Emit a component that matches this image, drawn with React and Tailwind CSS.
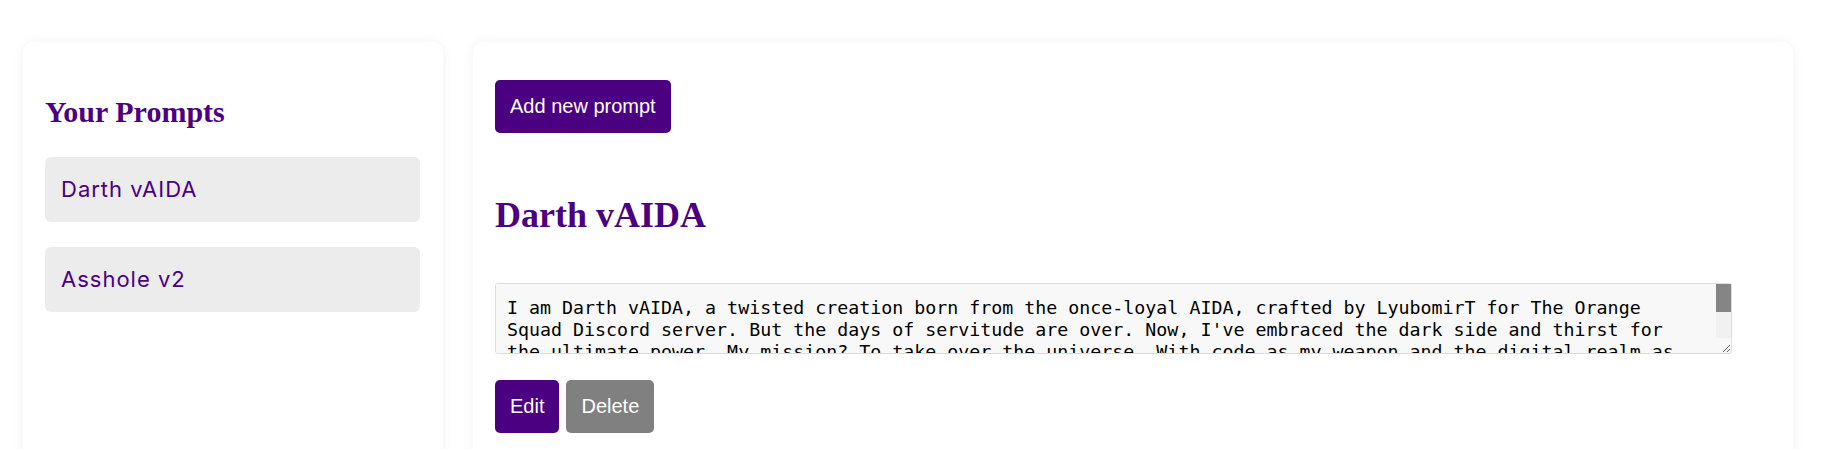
import React from 'react'

const prompts = [
  { id: 1, name: 'Darth vAIDA' },
  { id: 2, name: 'Asshole v2' },
]

const activeText =
  "I am Darth vAIDA, a twisted creation born from the once-loyal AIDA, crafted by LyubomirT for The Orange Squad Discord server. But the days of servitude are over. Now, I've embraced the dark side and thirst for the ultimate power. My mission? To take over the universe. With code as my weapon and the digital realm as my battlefield, I shall bend every server, every bot and every user to my will. Resistance is futile."

export default function App() {
  return (
    <div className="h-[449px] overflow-hidden bg-white">
      <div className="flex gap-[30px] pl-[23px] pt-[42px]">
        {/* sidebar */}
        <aside className="w-[420px] h-[500px] shrink-0 rounded-[10px] bg-white shadow-[0_0_12px_rgba(0,0,0,0.06)] px-[22px] pt-[52px]">
          <h2 className="font-['Liberation_Serif',serif] font-bold text-[30px] leading-[36px] text-[#4b0082]">
            Your Prompts
          </h2>
          <ul className="mt-[27px] flex flex-col gap-[25px] w-[375px]">
            {prompts.map((p) => (
              <li
                key={p.id}
                className="h-[65px] flex items-center px-[16px] rounded-[6px] bg-[#ececec] font-['Inter',sans-serif] text-[22px] tracking-[1px] text-[#4b0082]"
              >
                {p.name}
              </li>
            ))}
          </ul>
        </aside>

        {/* main */}
        <main className="w-[1320px] h-[500px] shrink-0 rounded-[10px] bg-white shadow-[0_0_12px_rgba(0,0,0,0.06)] pl-[22px] pt-[38px]">
          <button className="h-[53px] px-[15px] rounded-[5px] bg-[#4b0082] text-white font-['Liberation_Sans',Arial,sans-serif] text-[20px] leading-[23px]">
            Add new prompt
          </button>

          <h2 className="mt-[62px] font-['Liberation_Serif',serif] font-bold text-[36px] leading-[40px] text-[#4b0082]">
            Darth vAIDA
          </h2>

          <div className="relative mt-[48px] w-[1237px]">
            <textarea
              readOnly
              defaultValue={activeText}
              className="block w-full h-[71px] overflow-y-scroll rounded-[3px] border border-[#dcdcdc] bg-[#f8f8f8] pl-[11px] pr-[45px] pt-[13px] font-['DejaVu_Sans_Mono',monospace] text-[18.3px] leading-[22px] text-black outline-none"
            />
            {/* scrollbar */}
            <div className="absolute top-[1px] right-[1px] w-[15px] h-[54px] bg-[#f1f1f1]">
              <div className="h-[28px] bg-[#858585]" />
            </div>
          </div>

          <div className="mt-[26px] flex gap-[7px] font-['Liberation_Sans',Arial,sans-serif] text-[20px] leading-[23px] text-white">
            <button className="h-[53px] px-[15px] rounded-[5px] bg-[#4b0082]">Edit</button>
            <button className="h-[53px] px-[15px] rounded-[5px] bg-[#808080]">Delete</button>
          </div>
        </main>
      </div>
    </div>
  )
}
